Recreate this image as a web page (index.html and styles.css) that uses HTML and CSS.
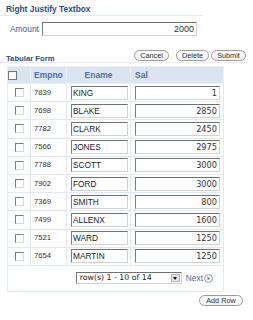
FILE: index.html
```html
<!DOCTYPE html>
<html lang="en">
<head>
    <meta charset="UTF-8">
    <title>Tabular Form</title>
    <link rel="stylesheet" href="styles.css">
</head>
<body>
    <div class="region-title">Right Justify Textbox</div>
    <div class="field-row">
        <label for="amount">Amount</label>
        <input type="text" id="amount" class="text-in amount" value="2000">
    </div>

    <div class="form-head">
        <span class="form-title">Tabular Form</span>
        <div class="actions">
            <button class="btn btn-cancel">Cancel</button>
            <button class="btn btn-delete">Delete</button>
            <button class="btn btn-submit">Submit</button>
        </div>
    </div>

    <table class="grid">
        <thead>
            <tr>
                <th class="col-check"><span class="check head"></span></th>
                <th class="col-empno">Empno</th>
                <th class="col-ename">Ename</th>
                <th class="col-sal">Sal</th>
            </tr>
        </thead>
        <tbody id="rows"></tbody>
        <tfoot>
            <tr>
                <td colspan="4" class="pager-cell">
                    <div class="pager">
                        <span class="pager-select">
                            <span class="pager-text">row(s) 1 - 10 of 14</span>
                            <span class="pager-arrow"></span>
                        </span>
                        <a class="next">Next</a>
                        <svg class="next-icon" width="9" height="9" viewBox="0 0 9 9">
                            <circle cx="4.5" cy="4.5" r="4" fill="#f4f4f4" stroke="#9a9a9a" stroke-width="1"/>
                            <path d="M3.5 2.5 L6.2 4.5 L3.5 6.5 Z" fill="#8a8a8a"/>
                        </svg>
                    </div>
                </td>
            </tr>
        </tfoot>
    </table>

    <div class="add-row">
        <button class="btn btn-add">Add Row</button>
    </div>

    <script>
        const emps = [
            [7839, 'KING', 1],
            [7698, 'BLAKE', 2850],
            [7782, 'CLARK', 2450],
            [7566, 'JONES', 2975],
            [7788, 'SCOTT', 3000],
            [7902, 'FORD', 3000],
            [7369, 'SMITH', 800],
            [7499, 'ALLENX', 1600],
            [7521, 'WARD', 1250],
            [7654, 'MARTIN', 1250]
        ];

        const body = document.getElementById('rows');
        emps.forEach(e => {
            const tr = document.createElement('tr');
            tr.innerHTML =
                '<td class="col-check"><span class="check"></span></td>' +
                '<td class="col-empno">' + e[0] + '</td>' +
                '<td class="col-ename"><input type="text" class="text-in ename" value="' + e[1] + '"></td>' +
                '<td class="col-sal"><input type="text" class="text-in sal" value="' + e[2] + '"></td>';
            body.appendChild(tr);
        });
    </script>
</body>
</html>
```

FILE: styles.css
```css
:root {
    --title: #2a4d7f;
    --head-text: #4b6f9f;
    --head-bg: #dbe5f1;
    --line: #e1e9f3;
    --link: #4d72a6;
}

body {
    margin: 0;
    background: #fff;
    font-family: "Liberation Sans", Arial, sans-serif;
    font-size: 8.5px;
    color: #222;
}

.region-title {
    width: 197px;
    padding: 4px 0 1px 6px;
    line-height: 10px;
    font-weight: bold;
    font-size: 8.4px;
    color: var(--title);
    border-bottom: 1px solid #e4ecf5;
}

.field-row {
    display: flex;
    align-items: center;
    margin-top: 5px;
    padding-left: 10px;
    height: 15px;
}

.field-row label {
    width: 32px;
    color: #3b5c8a;
    font-size: 8.4px;
}

.text-in {
    display: block;
    box-sizing: border-box;
    height: 14px;
    margin: 0;
    padding: 0 2px;
    border: 1px solid #d2d2d2;
    border-top-color: #707070;
    border-left-color: #7c7c7c;
    background: #fff;
    outline: none;
}

.amount {
    width: 155px;
    text-align: right;
    font-family: "Liberation Sans", Arial, sans-serif;
    font-size: 9px;
    color: #333;
}

.form-head {
    display: flex;
    align-items: center;
    justify-content: space-between;
    width: 240px;
    height: 14px;
    margin-top: 12px;
    padding: 0 1px 0 6px;
    border-bottom: 1px solid #e4ecf5;
}

.form-title {
    font-weight: bold;
    font-size: 7.7px;
    color: var(--title);
    padding-top: 6px;
}

.actions {
    display: flex;
    align-items: center;
}

.btn {
    height: 11px;
    padding: 0;
    border: 1px solid #9c9c9c;
    border-radius: 6px;
    background: linear-gradient(#fff, #f1f1f1);
    font-family: "Liberation Sans", Arial, sans-serif;
    font-size: 7.3px;
    line-height: 9px;
    color: #333;
}

.btn-cancel { width: 35px; }
.btn-delete { width: 33px; margin-left: 7px; }
.btn-submit { width: 35px; margin-left: 2px; }

.grid {
    margin: 3px 0 0 7px;
    width: 216px;
    border-collapse: collapse;
    table-layout: fixed;
    border: 1px solid var(--line);
}

.grid th,
.grid td {
    box-sizing: border-box;
    padding: 0;
    line-height: 10px;
}

.grid th {
    height: 17px;
    background: var(--head-bg);
    color: var(--head-text);
    font-weight: bold;
    font-size: 8.5px;
    text-align: left;
    border: 1px solid #e9eff7;
}

.grid td {
    height: 18.2px;
    border: 1px solid var(--line);
    font-size: 7.7px;
    color: #333;
}

.col-check { width: 23px; text-align: center; }
.col-empno { width: 36px; }
.grid td.col-empno, .grid th.col-empno { padding-left: 3px; }
.col-ename { width: 64px; }
.grid th.col-ename { text-align: center; }
.grid td.col-ename { padding-left: 4px; }
.col-sal { width: 93px; }
.grid th.col-sal { padding-left: 4px; }
.grid td.col-sal { padding-left: 4px; }

.check {
    display: inline-block;
    width: 7px;
    height: 7px;
    vertical-align: middle;
    background: #fff;
    border: 1px solid #d8d8d8;
    border-top-color: #7d7d7d;
    border-left-color: #7d7d7d;
}

.check.head {
    border-color: #767676;
}

.ename {
    width: 57px;
    font-family: "Liberation Sans", Arial, sans-serif;
    font-size: 8.3px;
    color: #222;
    padding-left: 1px;
}

.sal {
    width: 85px;
    text-align: right;
    font-family: "DejaVu Sans", Verdana, sans-serif;
    font-size: 8.2px;
    color: #333;
}

.grid td.pager-cell {
    height: 26px;
    padding: 0 10px 0 0;
}

.pager {
    display: flex;
    align-items: center;
    justify-content: flex-end;
}

.pager-select {
    display: flex;
    align-items: center;
    justify-content: space-between;
    box-sizing: border-box;
    width: 106px;
    height: 12px;
    padding: 0 1px 0 3px;
    border: 1px solid #d2d2d2;
    border-top-color: #707070;
    border-left-color: #7c7c7c;
    background: #fff;
}

.pager-text {
    font-family: "DejaVu Sans", Verdana, sans-serif;
    font-size: 7.8px;
    color: #222;
}

.pager-arrow {
    position: relative;
    width: 9px;
    height: 8px;
    background: #e4e4e4;
    border: 1px solid #b5b5b5;
    box-sizing: border-box;
}

.pager-arrow::after {
    content: "";
    position: absolute;
    left: 1.5px;
    top: 2px;
    border-left: 2.5px solid transparent;
    border-right: 2.5px solid transparent;
    border-top: 3px solid #111;
}

.next {
    margin-left: 4px;
    color: var(--link);
    font-size: 8.4px;
}

.next-icon {
    margin-left: 1px;
}

.add-row {
    display: flex;
    justify-content: flex-end;
    width: 243px;
    margin-top: 3px;
}

.btn-add {
    width: 44px;
}
```
